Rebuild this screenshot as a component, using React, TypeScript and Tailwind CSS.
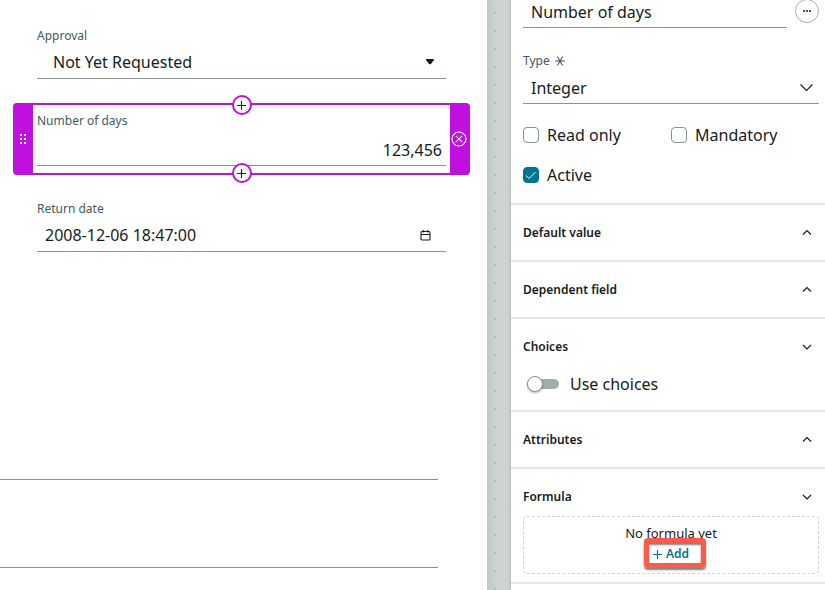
import type { ReactNode } from "react";

function Chevron({ up = false, size = 10 }: { up?: boolean; size?: number }) {
  return (
    <svg
      width={size}
      height={size}
      viewBox="0 0 10 10"
      fill="none"
      stroke="currentColor"
      strokeWidth={size > 10 ? 0.8 : 1.2}
      aria-hidden="true"
    >
      <path d={up ? "M1 6.500l4-4 4 4" : "M1 3l4 4 4-4"} />
    </svg>
  );
}

function PlusIcon({ size }: { size: number }) {
  return (
    <svg width={size} height={size} viewBox="0 0 9 9" stroke="currentColor" strokeWidth="1.100" aria-hidden="true">
      <path d="M4.500 0v9M0 4.500h9" />
    </svg>
  );
}

function InsertButton({ label, className }: { label: string; className: string }) {
  return (
    <button
      type="button"
      aria-label={label}
      className={`absolute left-1/2 flex size-5 -translate-x-1/2 items-center justify-center rounded-full border-2 border-[#bf10e0] bg-white text-[#1b2426] ${className}`}
    >
      <PlusIcon size={9} />
    </button>
  );
}

function CheckField({ id, label, checked = false }: { id: string; label: string; checked?: boolean }) {
  return (
    <div className="flex items-center gap-2">
      <span className="relative flex">
        <input
          id={id}
          type="checkbox"
          defaultChecked={checked}
          className="peer size-4 appearance-none rounded border border-[#869393] bg-white checked:border-[#00758f] checked:bg-[#00758f]"
        />
        <svg
          className="pointer-events-none absolute inset-0 hidden text-white peer-checked:block"
          width="16"
          height="16"
          viewBox="0 0 16 16"
          fill="none"
          stroke="currentColor"
          aria-hidden="true"
        >
          <path d="M3 8.500l3 3 6.500-6.500" />
        </svg>
      </span>
      <label htmlFor={id}>{label}</label>
    </div>
  );
}

function Section({ title, open = false, children }: { title: string; open?: boolean; children?: ReactNode }) {
  return (
    <section className="border-t-2 border-[#e4e8e8] pr-[6px] pl-3">
      <h2>
        <button
          type="button"
          aria-expanded={open}
          className={`flex w-full items-center justify-between pt-[18px] pr-[7px] text-left text-[12px] leading-5 font-semibold ${open ? "" : "pb-[17px]"}`}
        >
          {title}
          <Chevron up={!open} />
        </button>
      </h2>
      {children}
    </section>
  );
}

const labelStyle = "block text-[12px] leading-5 text-[#44585b]";
const lineStyle = "w-full appearance-none border-b border-[#869393] bg-transparent outline-none";

export default function App() {
  return (
    <div className="flex min-h-screen items-stretch overflow-hidden bg-white font-['Noto_Sans','Open_Sans',sans-serif] text-[16px] leading-6 text-[#161b1c]">
      <main className="min-w-0 flex-1 pt-[26px]">
        <div className="pr-[41px] pl-[37px]">
          <label htmlFor="approval" className={labelStyle}>Approval</label>
          <div className="relative">
            <select id="approval" className={`${lineStyle} block h-[33px] pl-4`}>
              <option>Not Yet Requested</option>
            </select>
            <svg className="pointer-events-none absolute top-[13px] right-3" width="8" height="6" viewBox="0 0 8 6" aria-hidden="true">
              <path d="M0 0h8v1L4.700 5.200h-1.400L0 1z" fill="#161b1c" />
            </svg>
          </div>
        </div>

        <div className="relative mt-6 mr-[17px] ml-[13px] flex h-[72px] rounded bg-[#bf10e0] py-[2px]">
          <button type="button" aria-label="Move field" className="flex w-5 items-center justify-center text-white">
            <svg width="6" height="12" viewBox="0 0 6 12" fill="currentColor" aria-hidden="true">
              <path d="M0 1h2v2H0zM4 1h2v2H4zM0 5h2v2H0zM4 5h2v2H4zM0 9h2v2H0zM4 9h2v2H4z" />
            </svg>
          </button>
          <div className="min-w-0 flex-1 bg-white px-1 pt-[6px]">
            <label htmlFor="days" className={labelStyle}>Number of days</label>
            <input id="days" type="text" defaultValue="123,456" className={`${lineStyle} mt-[3px] block h-8 pr-1 text-right`} />
          </div>
          <button type="button" aria-label="Remove field" className="flex w-5 items-center justify-start text-white">
            <svg className="ml-px" width="16" height="16" viewBox="0 0 16 16" fill="none" stroke="currentColor" strokeWidth="1.100" aria-hidden="true">
              <circle cx="8" cy="8" r="7" />
              <path d="M4.800 4.800l6.400 6.400M11.200 4.800l-6.400 6.400" />
            </svg>
          </button>
          <InsertButton label="Insert field above" className="-top-2" />
          <InsertButton label="Insert field below" className="-bottom-2" />
        </div>

        <div className="mt-6 pr-[41px] pl-[37px]">
          <label htmlFor="return" className={labelStyle}>Return date</label>
          <div className="relative">
            <input id="return" type="text" defaultValue="2008-12-06 18:47:00" className={`${lineStyle} block h-[33px] pr-8 pl-2`} />
            <button type="button" aria-label="Pick a date" className="absolute top-[11px] right-[15px] text-[#161b1c]">
              <svg width="11" height="11" viewBox="0 0 11 11" fill="none" stroke="currentColor" strokeWidth="1.100" aria-hidden="true">
                <rect x="1" y="1.500" width="9" height="8.500" rx="1" />
                <path d="M1 4.500h9M3.300 0v2.500M7.700 0v2.500" />
              </svg>
            </button>
          </div>
        </div>

        <div className="mt-[140px] pr-[49px]">
          <textarea aria-label="Comments" className={`${lineStyle} block h-[88px] resize-none`} />
          <textarea aria-label="Notes" className={`${lineStyle} block h-[88px] resize-none`} />
        </div>
      </main>

      <div className="flex w-6 shrink-0 bg-linear-to-r from-[#c0c7c7] via-[#cdd3d3] via-40% to-[#cdd3d3]">
        <div className="ml-[7px] w-[2px] bg-[linear-gradient(#b4bbbb_2px,transparent_2px)] bg-size-[2px_18px] bg-position-[0_12px]" />
      </div>

      <aside className="w-[314px] shrink-0 shadow-[-1px_0_2px_rgba(0,0,0,0.12)]">
        <div className="pr-[6px] pb-4 pl-3">
          <div className="flex items-start gap-2">
            <input aria-label="Field label" type="text" defaultValue="Number of days" className={`${lineStyle} h-7 min-w-0 flex-1 pb-1 pl-2`} />
            <button type="button" aria-label="More options" className="-mt-px flex size-6 items-center justify-center rounded-full border border-[#a3adad]">
              <svg width="8" height="2" viewBox="0 0 8 2" fill="currentColor" aria-hidden="true">
                <circle cx="1" cy="1" r="1" />
                <circle cx="4" cy="1" r="1" />
                <circle cx="7" cy="1" r="1" />
              </svg>
            </button>
          </div>

          <label htmlFor="type" className="mt-[23px] flex items-center gap-[5px] text-[12px] leading-5 text-[#44585b]">
            Type
            <svg width="10" height="12" viewBox="0 0 10 12" stroke="currentColor" strokeWidth="1.100" aria-hidden="true">
              <path d="M0 6h10M2.400 1.500l5.200 9M7.600 1.500l-5.200 9" />
            </svg>
          </label>
          <div className="relative">
            <select id="type" className={`${lineStyle} block h-[33px] pt-px pl-2`}>
              <option>Integer</option>
            </select>
            <span className="pointer-events-none absolute top-[9px] right-[5px]">
              <Chevron size={15} />
            </span>
          </div>

          <div className="mt-[19px] grid grid-cols-2 gap-y-4">
            <CheckField id="readonly" label="Read only" />
            <CheckField id="mandatory" label="Mandatory" />
            <CheckField id="active" label="Active" checked />
          </div>
        </div>

        <Section title="Default value" />
        <Section title="Dependent field" />
        <Section title="Choices" open>
          <div className="mt-[15px] flex items-center gap-[11px] pb-[14px] pl-1">
            <input
              id="choices"
              type="checkbox"
              role="switch"
              className="relative h-[10px] w-8 appearance-none rounded-full bg-[#a3adad] before:absolute before:-top-[3px] before:left-0 before:size-4 before:rounded-full before:border before:border-[#869393] before:bg-white before:shadow-[0_1px_2px_rgba(0,0,0,0.3)] checked:bg-[#00758f] checked:before:left-4"
            />
            <label htmlFor="choices">Use choices</label>
          </div>
        </Section>
        <Section title="Attributes" />
        <Section title="Formula" open>
          <div className="mt-[9px] mb-2 flex h-[58px] flex-col items-center gap-px rounded border border-dashed border-[#cfd5d5] pt-[6px] text-[13px]">
            <p className="leading-5">No formula yet</p>
            <div className="relative">
              <button type="button" className="flex items-center gap-1 text-[12px] leading-5 font-semibold text-[#00758f]">
                <PlusIcon size={9} />
                Add
              </button>
              <span className="pointer-events-none absolute -top-[6px] -right-[17px] -bottom-[4px] -left-[9px] rounded border-[5px] border-[#fc5b4a] shadow-[0_2px_2px_rgba(0,0,0,0.5),inset_0_2px_2px_rgba(0,0,0,0.5)]" />
            </div>
          </div>
        </Section>
        <div className="border-t-2 border-[#e4e8e8]" />
      </aside>
    </div>
  );
}
